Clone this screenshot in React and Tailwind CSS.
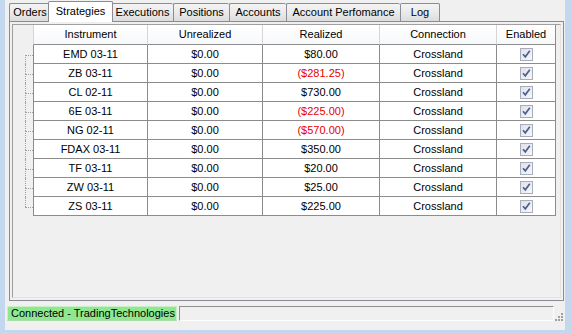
import React from "react";

const tabs = [
  { label: "Orders", w: "w-[41px]" },
  { label: "Strategies", w: "w-[65px]", active: true },
  { label: "Executions", w: "w-[62px]" },
  { label: "Positions", w: "w-[56px]" },
  { label: "Accounts", w: "w-[57px]" },
  { label: "Account Perfomance", w: "w-[114px]" },
  { label: "Log", w: "w-[40px]" },
];

const rows = [
  { inst: "EMD 03-11", real: "$80.00" },
  { inst: "ZB 03-11", real: "($281.25)", neg: true },
  { inst: "CL 02-11", real: "$730.00" },
  { inst: "6E 03-11", real: "($225.00)", neg: true },
  { inst: "NG 02-11", real: "($570.00)", neg: true },
  { inst: "FDAX 03-11", real: "$350.00" },
  { inst: "TF 03-11", real: "$20.00" },
  { inst: "ZW 03-11", real: "$25.00" },
  { inst: "ZS 03-11", real: "$225.00" },
];

// column widths include the right grid line
const cols = ["w-[115px]", "w-[115px]", "w-[117px]", "w-[117px]", "w-[59px]"];

const CheckMark = () => (
  <div className="w-[13px] h-[13px] border border-[#a7adbb] bg-gradient-to-br from-[#dfe2e8] to-[#f7f7f9] flex items-center justify-center">
    <svg width="9" height="9" viewBox="0 0 9 9">
      <path d="M1 4.2 L3.3 6.8 L7.8 0.8" fill="none" stroke="#4c5f90" strokeWidth="1.7" />
    </svg>
  </div>
);

const TreeCell = ({ first, last }) => (
  <div className="w-[20px] h-[19px] flex flex-col pl-[12px]">
    <div className={`h-[10px] ${first ? "" : "border-l border-dotted border-[#a0a0a0]"}`} />
    <div
      className={`h-[9px] border-t border-dotted border-[#a0a0a0] ${
        last ? "" : "border-l"
      }`}
    />
  </div>
);

export default function App() {
  return (
    <div className="w-[572px] h-[333px] bg-[#c3d7ee] pl-[5px] pr-[7px] pb-[3px] flex flex-col font-['Liberation_Sans',Arial,sans-serif] text-[11px] leading-none text-black overflow-hidden">
      <div className="flex-1 bg-[#f0f0f0] flex flex-col pl-[4px] pr-[1px]">
        {/* Tab strip */}
        <div className="h-[21px] flex items-end relative z-10">
          {tabs.map((t) =>
            t.active ? (
              <div
                key={t.label}
                className={`${t.w} -mx-[2px] h-[21px] -mb-[1px] bg-white border border-b-0 border-[#898c95] rounded-t-[2px] flex items-center justify-center pb-[2px] relative z-10`}
              >
                {t.label}
              </div>
            ) : (
              <div
                key={t.label}
                className={`${t.w} h-[18px] bg-gradient-to-b from-[#f4f4f4] via-[#eaeaea] to-[#dcdcdc] border border-b-0 border-r-0 last:border-r border-[#898c95] rounded-t-[2px] flex items-center justify-center`}
              >
                {t.label}
              </div>
            )
          )}
        </div>

        {/* Tab page */}
        <div className="h-[280px] border border-[#898c95] bg-[#f0f0f0] p-[2px] flex">
          <div className="flex-1 border border-[#a0a0a0] border-r-[#e3e3e3] border-b-[#e3e3e3] bg-[#f0f0f0] flex">
            <div className="flex flex-col">
              {/* header */}
              <div className="flex h-[20px]">
                <div className="w-[20px] bg-[#f0f0f0]" />
                {["Instrument", "Unrealized", "Realized", "Connection", "Enabled"].map(
                  (h, i) => (
                    <div
                      key={h}
                      className={`${cols[i]} bg-gradient-to-b from-white to-[#f7f8fa] border-r border-b border-[#d5d5d5] border-b-[#8c8c8c] flex items-center justify-center ${
                        i === 0 ? "border-l border-l-[#d5d5d5]" : ""
                      } ${i === 4 ? "border-r-[#8c8c8c]" : ""}`}
                    >
                      {h}
                    </div>
                  )
                )}
              </div>
              {rows.map((r, idx) => (
                <div key={r.inst} className="flex h-[19px]">
                  <TreeCell first={idx === 0} last={idx === rows.length - 1} />
                  <div
                    className={`${cols[0]} bg-white border-l border-r border-b border-[#8c8c8c] flex items-center justify-center`}
                  >
                    {r.inst}
                  </div>
                  <div className={`${cols[1]} bg-white border-r border-b border-[#8c8c8c] flex items-center justify-center`}>
                    $0.00
                  </div>
                  <div
                    className={`${cols[2]} bg-white border-r border-b border-[#8c8c8c] flex items-center justify-center ${
                      r.neg ? "text-[#e80000]" : ""
                    }`}
                  >
                    {r.real}
                  </div>
                  <div className={`${cols[3]} bg-white border-r border-b border-[#8c8c8c] flex items-center justify-center`}>
                    Crossland
                  </div>
                  <div className={`${cols[4]} bg-white border-r border-b border-[#8c8c8c] flex items-center justify-center`}>
                    <CheckMark />
                  </div>
                </div>
              ))}
            </div>
          </div>
        </div>

        {/* Status bar */}
        <div className="flex-1 flex items-start pt-[5px] -ml-[2px] -mr-[1px]">
          <div className="w-[170px] h-[15px] bg-[#8fe88f] border border-[#c8f0c8] border-b-[#a9dca9] flex items-center pl-[3px]">
            Connected - TradingTechnologies
          </div>
          <div className="ml-[2px] w-[375px] h-[15px] border-t border-l border-[#8f8f8f] border-b border-b-white border-r border-r-white" />
          <div className="flex-1 h-[16px] flex items-end justify-end pr-[1px]">
            <svg width="10" height="10" viewBox="0 0 10 10">
              <rect x="7" y="1" width="2" height="2" fill="#a0a0a0" />
              <rect x="4" y="4" width="2" height="2" fill="#a0a0a0" />
              <rect x="7" y="4" width="2" height="2" fill="#a0a0a0" />
              <rect x="1" y="7" width="2" height="2" fill="#a0a0a0" />
              <rect x="4" y="7" width="2" height="2" fill="#a0a0a0" />
              <rect x="7" y="7" width="2" height="2" fill="#a0a0a0" />
            </svg>
          </div>
        </div>
      </div>
    </div>
  );
}
